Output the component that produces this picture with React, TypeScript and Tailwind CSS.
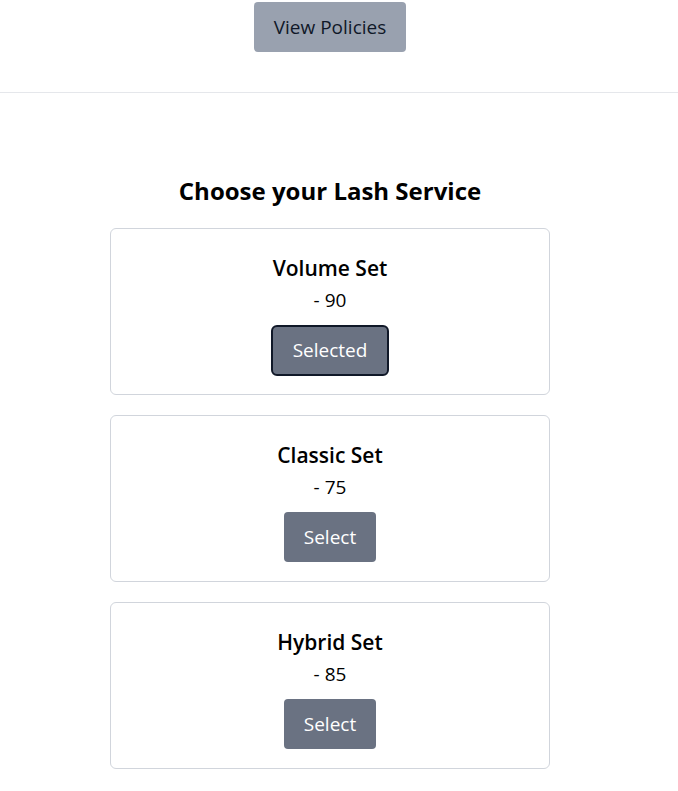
import React, { useState } from 'react';

const SERVICES = [
  { id: 'volume', name: 'Volume Set', price: 90 },
  { id: 'classic', name: 'Classic Set', price: 75 },
  { id: 'hybrid', name: 'Hybrid Set', price: 85 },
];

export default function App() {
  const [selected, setSelected] = useState('volume');

  return (
    <div className="min-h-screen bg-white text-black font-['Open_Sans',sans-serif]">
      <div className="w-[660px]">
        <div className="flex justify-center pt-[2px] pb-10">
          <button className="h-[50px] px-5 rounded bg-gray-400 text-[19px] text-gray-900">
            View Policies
          </button>
        </div>
      </div>
      <div className="border-t border-gray-200" />
      <div className="w-[660px] pt-[82px]">
        <h2 className="text-2xl font-bold text-center mb-[21px]">Choose your Lash Service</h2>
        <div className="w-[440px] mx-auto flex flex-col gap-5">
          {SERVICES.map((s) => {
            const isSel = selected === s.id;
            return (
              <div key={s.id} className="border border-gray-300 rounded-md pt-[25px] pb-[19px] flex flex-col items-center">
                <h3 className="text-[21px] font-semibold leading-7 mb-[4px]">{s.name}</h3>
                <p className="text-[19px] leading-7 mb-px">- {s.price}</p>
                <button
                  onClick={() => setSelected(s.id)}
                  className={
                    isSel
                      ? 'mt-2.5 h-[51px] -mb-px px-5 rounded-md bg-gray-500 text-white text-[19px] border-2 border-gray-900'
                      : 'mt-2.5 h-[50px] px-5 rounded bg-gray-500 text-white text-[19px]'
                  }
                >
                  {isSel ? 'Selected' : 'Select'}
                </button>
              </div>
            );
          })}
        </div>
      </div>
    </div>
  );
}
